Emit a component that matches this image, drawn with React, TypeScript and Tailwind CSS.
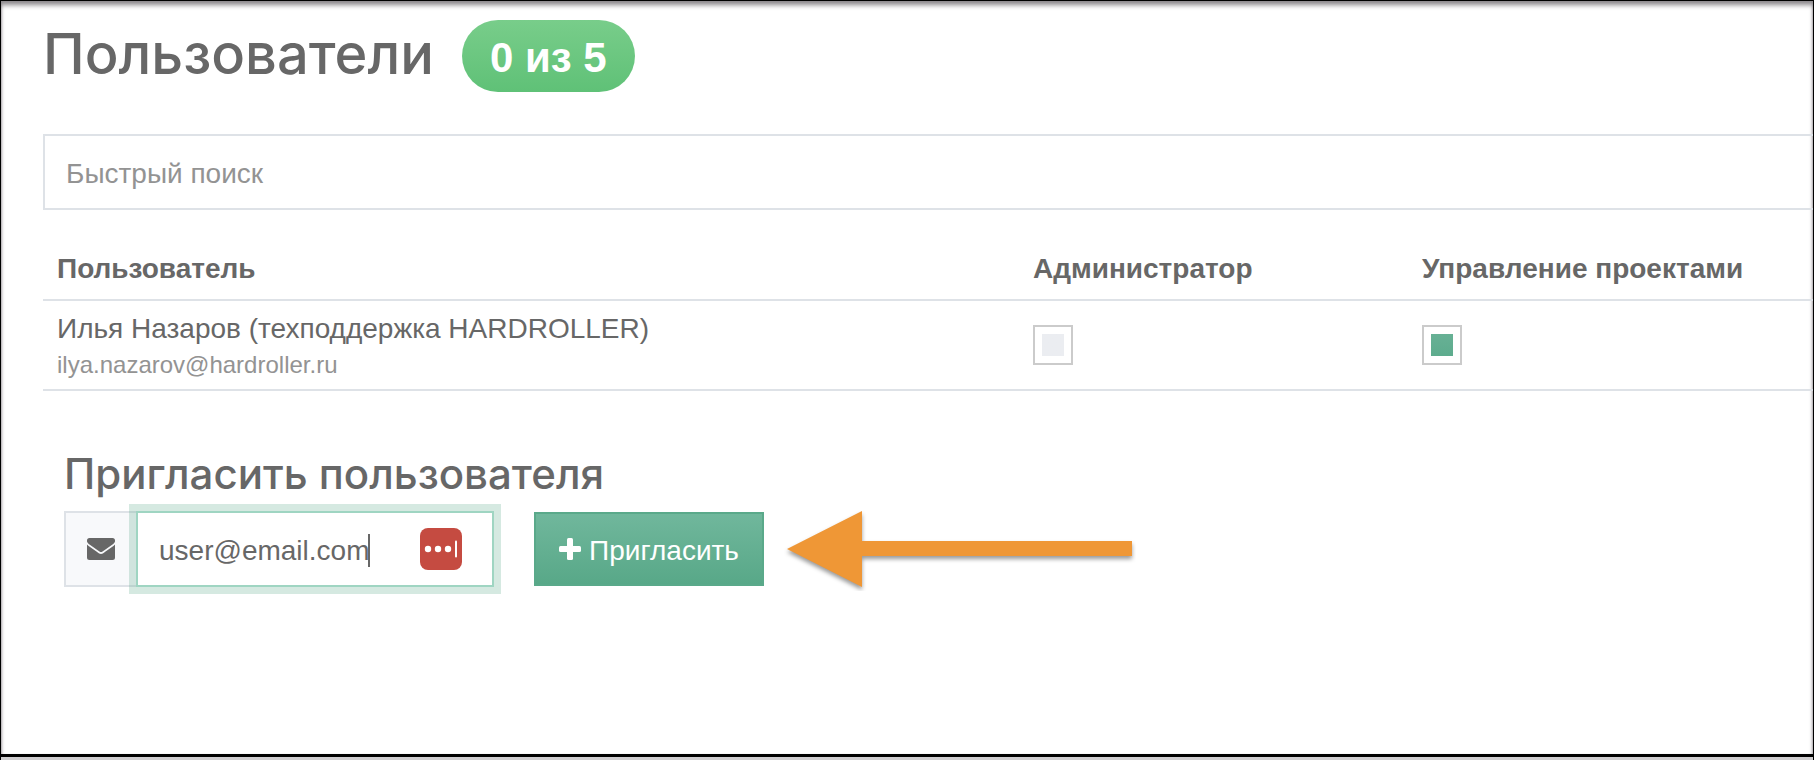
import { useState } from 'react';

interface User {
  name: string;
  email: string;
  admin: boolean;
  projects: boolean;
}

const initialUsers: User[] = [
  { name: 'Илья Назаров (техподдержка HARDROLLER)', email: 'ilya.nazarov@hardroller.ru', admin: false, projects: true },
];

interface PermissionProps {
  label: string;
  checked: boolean;
  onChange: (checked: boolean) => void;
}

function Permission({ label, checked, onChange }: PermissionProps) {
  return (
    <input
      type="checkbox"
      aria-label={label}
      checked={checked}
      onChange={(e) => onChange(e.target.checked)}
      className="block h-10 w-10 appearance-none border-2 border-[#cbcbcb] bg-linear-to-b from-[#ebedf1] to-[#ebedf1] bg-clip-content p-[7px] checked:from-[#6ab297] checked:to-[#5aaa8b]"
    />
  );
}

function EnvelopeIcon() {
  return (
    <svg viewBox="0 0 28 22" className="h-[22px] w-7" fill="#676767" aria-hidden="true">
      <path d="M2.500 0H25.500A2.500 2.500 0 0 1 28 2.500V3.500C27.500 4.800 26.500 5.800 25.500 6.500L17 12.500C16 13.300 15 14.100 14 14.100S12 13.300 11 12.500L2.500 6.500C1.500 5.800 .5 4.800 0 3.500V2.500A2.500 2.500 0 0 1 2.500 0Z" />
      <path d="M0 6.500C.5 7 1 7.500 1.600 7.900L9.800 13.700C11 14.700 12.500 15.900 14 15.900S17 14.700 18.200 13.700L26.400 7.900C27 7.500 27.500 7 28 6.500V19.500A2.500 2.500 0 0 1 25.500 22H2.500A2.500 2.500 0 0 1 0 19.500Z" />
    </svg>
  );
}

function PlusIcon() {
  return (
    <svg viewBox="0 0 22 22" className="h-[22px] w-[22px]" fill="#fff" aria-hidden="true">
      <rect x="8" width="6" height="22" rx="1.500" />
      <rect y="8" width="22" height="6" rx="1.500" />
    </svg>
  );
}

function PasswordManagerIcon() {
  return (
    <svg viewBox="0 0 42 42" className="h-[42px] w-[42px]" aria-hidden="true">
      <rect width="42" height="42" rx="8" fill="#c54b41" />
      <circle cx="8" cy="21" r="3.2" fill="#fff" />
      <circle cx="18" cy="21" r="3.2" fill="#fff" />
      <circle cx="28" cy="21" r="3.2" fill="#fff" />
      <rect x="35" y="12.500" width="2" height="17" rx="1" fill="#fff" />
    </svg>
  );
}

function PointerArrow() {
  return (
    <svg viewBox="0 0 352 84" className="ml-5 h-[84px] w-[352px] shrink-0" aria-hidden="true">
      <path
        d="M3 42 78 4V34H348V49H78V80Z"
        fill="#ef9736"
        className="drop-shadow-[0_3px_2px_rgba(0,0,0,0.4)]"
      />
    </svg>
  );
}

export default function App() {
  const [users, setUsers] = useState(initialUsers);
  const [search, setSearch] = useState('');
  const [email, setEmail] = useState('user@email.com');

  const update = (target: string, patch: Partial<User>) =>
    setUsers((list) => list.map((u) => (u.email === target ? { ...u, ...patch } : u)));

  return (
    <div className="flex min-h-screen flex-col overflow-hidden border-x border-t border-black bg-[#cfcdcf] font-['Liberation_Sans',Arial,sans-serif] text-[28px] leading-10 text-[#676767]">
      <main className="flex-1 border-b-3 border-black bg-white pl-[42px] shadow-[inset_0_5px_5px_-1px_#8a868a,inset_2px_0_2px_-1px_#c8c4c8,inset_-2px_0_2px_-1px_#c8c4c8]">
        <header className="flex items-center gap-7 pt-[19px]">
          <h1 className="pb-1 font-['Inter','Liberation_Sans',sans-serif] text-[56px] leading-[64px] font-medium">Пользователи</h1>
          <span className="flex h-[72px] items-center rounded-[36px] bg-linear-to-b from-[#78cd8a] to-[#5fc177] px-7 pt-1 text-[42px] font-bold text-white">
            0 из 5
          </span>
        </header>

        <input
          type="text"
          aria-label="Быстрый поиск"
          placeholder="Быстрый поиск"
          value={search}
          onChange={(e) => setSearch(e.target.value)}
          className="mt-[42px] block h-[76px] w-full border-2 border-r-0 border-[#dee2e7] px-[21px] pt-[3px] outline-none placeholder:text-[#939393]"
        />

        <table className="mt-[30px] w-full table-fixed border-collapse text-left">
          <thead>
            <tr className="h-[60px] border-b-2 border-[#dee2e7]">
              <th className="px-[14px] pb-[2px] font-bold">Пользователь</th>
              <th className="w-[389px] px-[14px] pb-[2px] font-bold">Администратор</th>
              <th className="w-[405px] px-[14px] pb-[2px] font-bold">Управление проектами</th>
            </tr>
          </thead>
          <tbody>
            {users.map((user) => (
              <tr key={user.email} className="h-[90px] border-b-2 border-[#dee2e7]">
                <td className="px-[14px] pt-1">
                  <div className="leading-9">{user.name}</div>
                  <div className="text-2xl leading-9 text-[#939393]">{user.email}</div>
                </td>
                <td className="px-[14px]">
                  <Permission label="Администратор" checked={user.admin} onChange={(admin) => update(user.email, { admin })} />
                </td>
                <td className="px-[14px]">
                  <Permission label="Управление проектами" checked={user.projects} onChange={(projects) => update(user.email, { projects })} />
                </td>
              </tr>
            ))}
          </tbody>
        </table>

        <form className="mt-[58px] ml-[21px]" onSubmit={(e) => e.preventDefault()}>
          <label htmlFor="email" className="block font-['Inter','Liberation_Sans',sans-serif] text-[42px] leading-[50px] font-medium">
            Пригласить пользователя
          </label>
          <div className="mt-2 flex items-center">
            <span className="flex h-[76px] w-[72px] items-center justify-center border-2 border-r-0 border-[#dee2e7] bg-[#f8f9fb]">
              <EnvelopeIcon />
            </span>
            <div className="relative">
              <input
                id="email"
                type="text"
                value={email}
                onChange={(e) => setEmail(e.target.value)}
                className="block h-[76px] w-[358px] border-2 border-[#9fd5c2] bg-white pt-[3px] pr-20 pl-[21px] ring-7 ring-[#57a889]/25 outline-none"
              />
              <span className="absolute top-[23px] left-[232px] h-[33px] w-[2px] bg-[#676767]" />
              <span className="absolute top-[17px] right-8">
                <PasswordManagerIcon />
              </span>
            </div>
            <button
              type="submit"
              className="ml-10 flex h-[74px] w-[230px] items-center justify-center gap-2 border-2 border-[#5aa98a] bg-linear-to-b from-[#70b79c] to-[#58a888] text-white"
            >
              <PlusIcon />
              <span className="pt-[3px]">Пригласить</span>
            </button>
            <PointerArrow />
          </div>
        </form>
      </main>
      <div className="h-[3px]" />
    </div>
  );
}
